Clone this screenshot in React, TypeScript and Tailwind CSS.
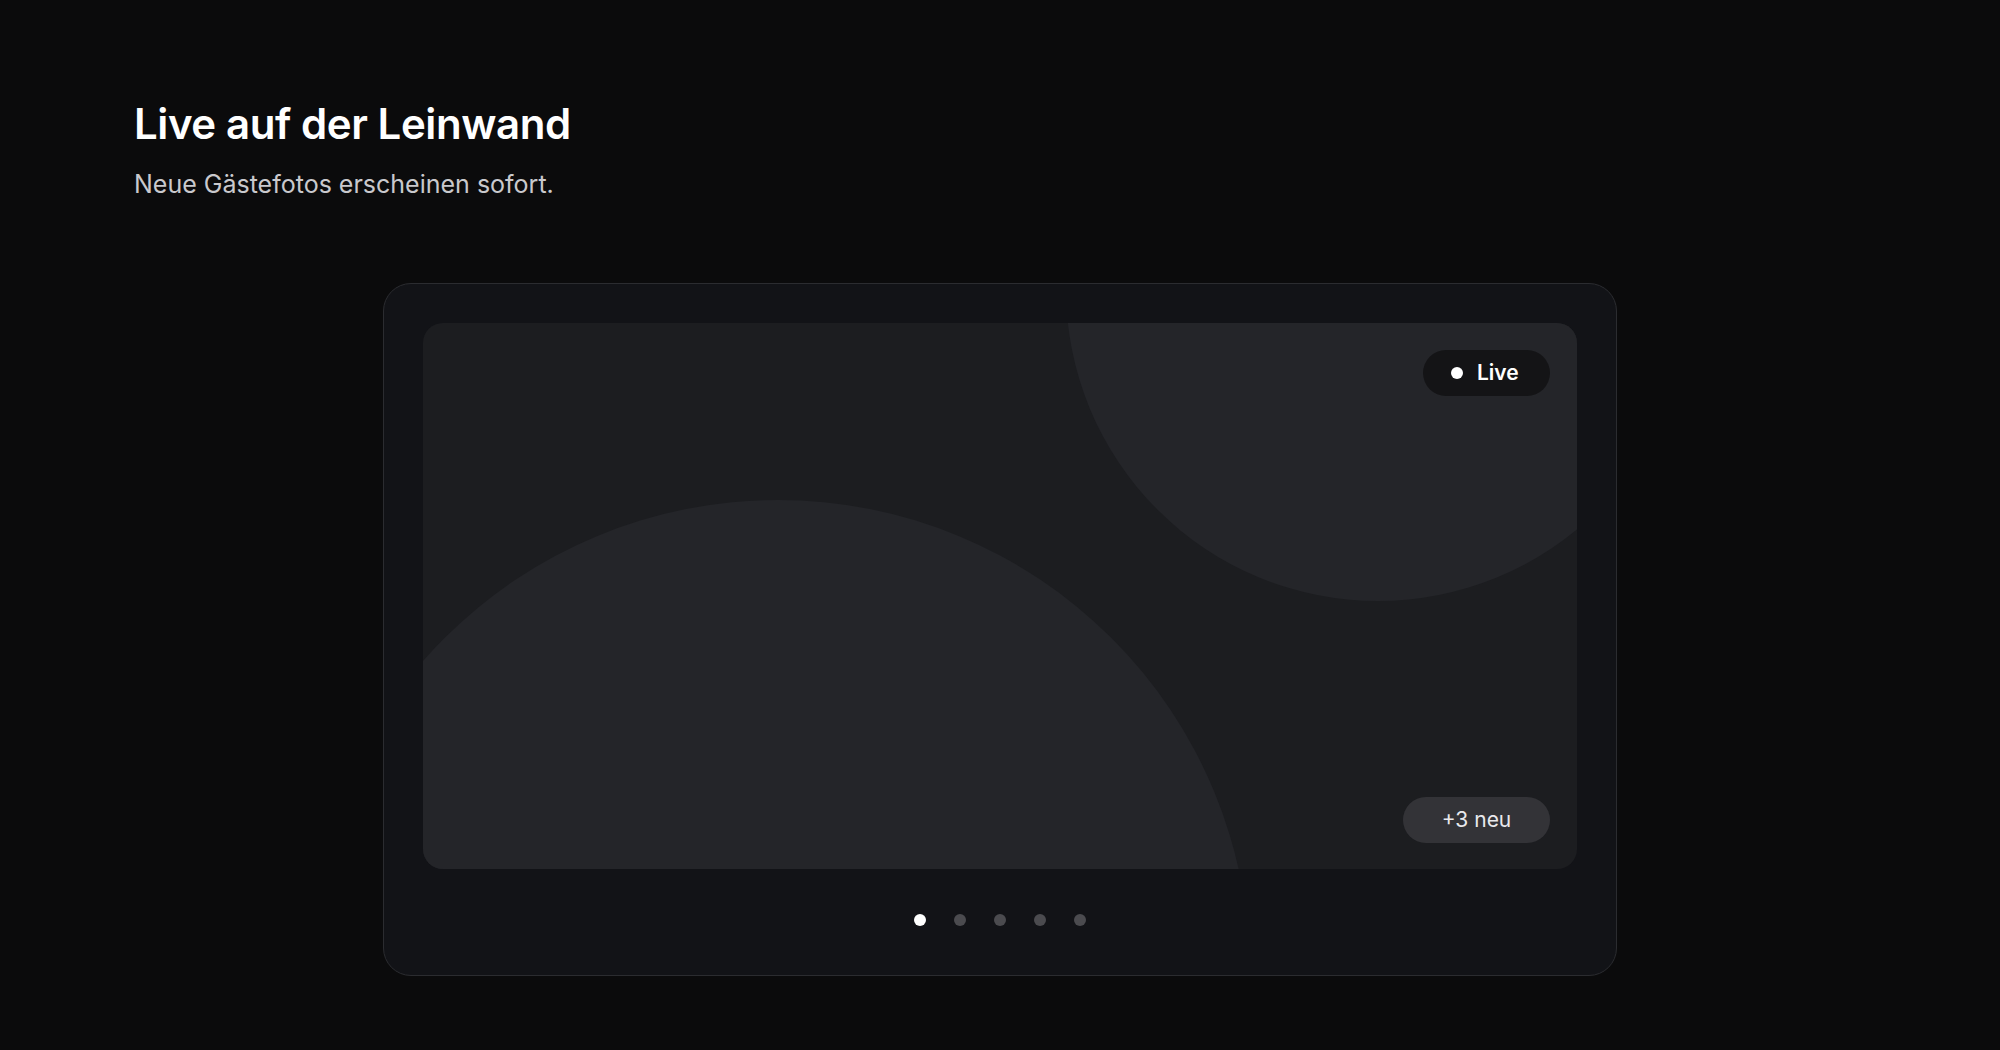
import React from "react";

const slides = [0, 1, 2, 3, 4];

export default function App() {
  return (
    <div
      className="min-h-screen w-full bg-[#0b0b0c] px-[134px] pt-[101px] pb-[74px]"
      style={{ fontFamily: "Inter, 'Noto Sans', sans-serif" }}
    >
      <h1 className="text-[42px] font-semibold leading-[1.1] tracking-[-0.01em] text-white">
        Live auf der Leinwand
      </h1>
      <p className="mt-[19px] text-[25px] leading-[1.5] text-[#c9c9cd]">
        Neue Gästefotos erscheinen sofort.
      </p>

      <div className="mx-auto mt-[79px] flex w-[1234px] flex-col items-center rounded-[28px] border border-[#2b2c30] bg-[#121317] px-[39px] pt-[39px] pb-[49px]">
        {/* projection screen */}
        <div className="relative h-[546px] w-full overflow-hidden rounded-[20px] bg-[#1c1d20]">
          <div className="absolute left-[-117px] top-[177px] h-[944px] w-[944px] rounded-full bg-[#242529]" />
          <div className="absolute left-[643px] top-[-346px] h-[624px] w-[624px] rounded-full bg-[#242529]" />

          <div className="absolute right-[27px] top-[27px] flex h-[46px] w-[127px] items-center gap-[14px] rounded-full bg-[#141416] pl-[28px]">
            <span className="h-[12px] w-[12px] rounded-full bg-white" />
            <span className="text-[21px] font-semibold leading-none text-white">Live</span>
          </div>

          <div className="absolute bottom-[26px] right-[27px] flex h-[46px] w-[147px] items-center justify-center rounded-full bg-[#333337]">
            <span className="text-[21px] leading-none text-[#e9e9ec]">+3 neu</span>
          </div>
        </div>

        {/* slide indicators */}
        <div className="mt-[45px] flex items-center gap-[28px]">
          {slides.map((i) => (
            <span
              key={i}
              className={
                i === 0
                  ? "h-[12px] w-[12px] rounded-full bg-white"
                  : "h-[12px] w-[12px] rounded-full bg-[#4b4b4f]"
              }
            />
          ))}
        </div>
      </div>
    </div>
  );
}
